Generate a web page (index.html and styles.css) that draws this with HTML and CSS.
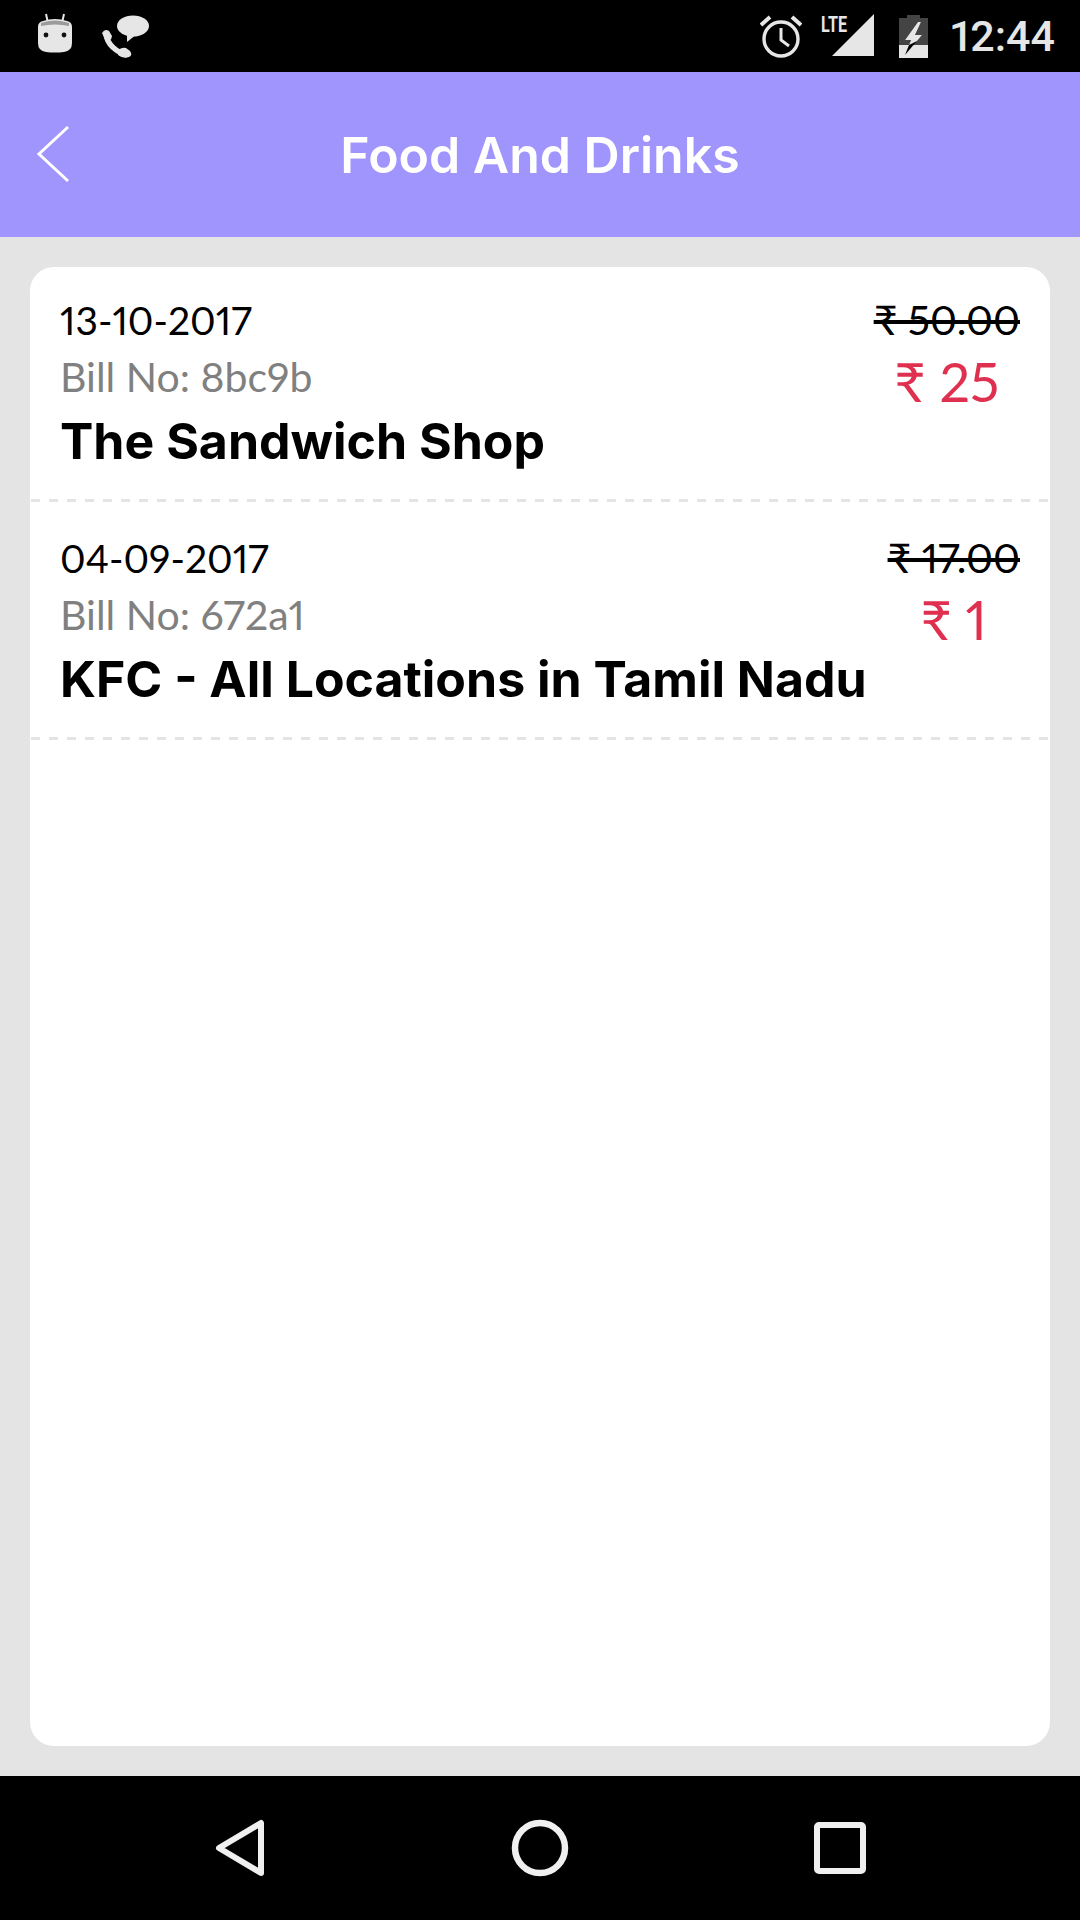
FILE: index.html
```html
<html>
<head>
    <title>Food And Drinks</title>
    <link rel="stylesheet" href="styles.css">
</head>
<body>
    <div class="statusBar">
        <div class="notifyIcons">
            <svg class="androidIcon" width="36" height="42" viewBox="0 0 36 42">
                <path d="M9 2 L11 11 M27 2 L25 11" stroke="#e6e6e6" stroke-width="2" fill="none"/>
                <path d="M6 9 Q18 5 30 9 Q35 10 35 15 L35 31 Q35 39 27 40 Q18 41 9 40 Q1 39 1 31 L1 15 Q1 10 6 9 Z" fill="#e6e6e6"/>
                <path d="M4 11 Q18 6 32 11 L32 14 Q18 11 4 14 Z" fill="#9a9a9a"/>
                <circle cx="9" cy="23" r="2.4" fill="#111"/>
                <circle cx="27" cy="23" r="2.4" fill="#111"/>
            </svg>
            <svg class="callIcon" width="52" height="46" viewBox="100 12 52 46">
                <path d="M107 33 C108 43 117 51 128 54" stroke="#e6e6e6" stroke-width="5.5" fill="none"/>
                <path d="M103 32 Q106 27 110 30 L113 35 Q113 38 110 40 L107 40 Z M119 50 Q122 46 127 47 L131 50 Q134 54 130 56 Q124 58 119 54 Z" fill="#e6e6e6"/>
                <ellipse cx="134" cy="25" rx="16" ry="10.5" fill="#e6e6e6"/>
                <path d="M128 32 L128 41 L138 33 Z" fill="#e6e6e6"/>
            </svg>
        </div>
        <div class="systemIcons">
            <svg class="alarmIcon" width="42" height="44" viewBox="0 0 42 44">
                <circle cx="21" cy="25" r="17" stroke="#e6e6e6" stroke-width="3.4" fill="none"/>
                <path d="M21 14 L21 26 L29 32" stroke="#e6e6e6" stroke-width="3" fill="none"/>
                <path d="M1 11 L10 3 M41 11 L32 3" stroke="#e6e6e6" stroke-width="4" fill="none"/>
            </svg>
            <svg class="signalIcon" width="54" height="60" viewBox="0 -8 54 60">
                <polygon points="12,42 54,0 54,42" fill="#e6e6e6"/>
                <text class="lteText" x="1" y="18" textLength="26" lengthAdjust="spacingAndGlyphs">LTE</text>
            </svg>
            <svg class="batteryIcon" width="29" height="43" viewBox="0 0 29 43">
                <path d="M8 0 L21 0 L21 3 L29 3 L29 30 L0 30 L0 3 L8 3 Z" fill="#444"/>
                <rect x="0" y="30" width="29" height="13" fill="#e6e6e6"/>
                <path d="M19 7 L6 25 L12 25 L6 40 L23 20 L16 20 L22 7 Z" fill="#000"/>
                <path d="M19 7 L6 25 L12 25 L10 30 L18 26 L23 20 L16 20 L22 7 Z" fill="#e6e6e6"/>
            </svg>
            <span class="clock">12:44</span>
        </div>
    </div>

    <div class="header">
        <svg class="backArrow" width="36" height="60" viewBox="0 0 36 60">
            <path d="M33 3 L4 30 L33 57" stroke="#fff" stroke-width="3" fill="none"/>
        </svg>
        <div class="headerTitle">Food And Drinks</div>
    </div>

    <div class="content">
        <div class="card">
            <div class="billRow">
                <div class="billInfo">
                    <div class="billDate">13-10-2017</div>
                    <div class="billNo">Bill No: 8bc9b</div>
                    <div class="shopName">The Sandwich Shop</div>
                </div>
                <div class="billPrice">
                    <div class="oldPrice">₹ 50.00</div>
                    <div class="newPrice">₹ 25</div>
                </div>
            </div>
            <div class="dashLine"></div>
            <div class="billRow">
                <div class="billInfo">
                    <div class="billDate">04-09-2017</div>
                    <div class="billNo">Bill No: 672a1</div>
                    <div class="shopName">KFC - All Locations in Tamil Nadu</div>
                </div>
                <div class="billPrice">
                    <div class="oldPrice">₹ 17.00</div>
                    <div class="newPrice">₹ 1</div>
                </div>
            </div>
            <div class="dashLine"></div>
        </div>
    </div>

    <div class="navBar">
        <svg width="60" height="60" viewBox="0 0 60 60">
            <path d="M51 5 L51 55 L9 30 Z" stroke="#f0f0f0" stroke-width="6" stroke-linejoin="round" fill="none"/>
        </svg>
        <svg width="60" height="60" viewBox="0 0 60 60">
            <circle cx="30" cy="30" r="25" stroke="#f0f0f0" stroke-width="6.5" fill="none"/>
        </svg>
        <svg width="60" height="60" viewBox="0 0 60 60">
            <rect x="7" y="7" width="46" height="46" rx="2" stroke="#f0f0f0" stroke-width="6" fill="none"/>
        </svg>
    </div>
</body>
</html>
```

FILE: styles.css
```css
body {
    margin: 0;
    width: 1080px;
    height: 1920px;
    display: flex;
    flex-direction: column;
    background-color: #e4e4e4;
    font-family: "Lato", "Roboto", sans-serif;
    font-variant-numeric: proportional-nums;
    overflow: hidden;
}

.statusBar {
    height: 72px;
    background-color: black;
    display: flex;
    justify-content: space-between;
    align-items: center;
    padding: 0 25px 0 37px;
}

.notifyIcons {
    display: flex;
    align-items: flex-start;
    gap: 26px;
}

.androidIcon {
    margin-top: -2px;
}

.callIcon {
    margin-top: -1px;
}

.systemIcons {
    display: flex;
    align-items: center;
}

.alarmIcon {
    margin-right: 18px;
}

.signalIcon {
    margin-right: 25px;
}

.batteryIcon {
    margin-right: 23px;
}

.lteText {
    font-family: "Roboto", sans-serif;
    font-weight: 700;
    font-size: 22px;
    fill: #e6e6e6;
}

.clock {
    font-family: "Roboto", sans-serif;
    font-size: 43px;
    font-weight: 500;
    color: #e6e6e6;
}

.header {
    height: 165px;
    background-color: #a094fd;
    display: flex;
    align-items: center;
    justify-content: center;
    position: relative;
}

.backArrow {
    position: absolute;
    left: 35px;
    top: 52px;
}

.headerTitle {
    font-family: "Inter", sans-serif;
    color: white;
    font-size: 50px;
    font-weight: 600;
}

.content {
    flex: 1;
    display: flex;
    padding: 30px;
}

.card {
    flex: 1;
    background-color: white;
    border-radius: 24px;
}

.billRow {
    display: flex;
    justify-content: space-between;
    padding: 27px 30px 22px 30px;
}

.billRow:first-child {
    padding-top: 24px;
}

.billDate {
    font-size: 39px;
    line-height: 58px;
    color: black;
}

.billNo {
    font-size: 41px;
    line-height: 56px;
    color: #808080;
}

.shopName {
    font-family: "Inter", sans-serif;
    font-size: 50px;
    line-height: 72px;
    font-weight: 700;
    color: black;
}

.billPrice {
    display: flex;
    flex-direction: column;
    align-items: center;
}

.oldPrice {
    font-size: 41px;
    line-height: 58px;
    color: black;
    text-decoration: line-through;
}

.newPrice {
    font-size: 54px;
    line-height: 66px;
    color: #e0304f;
}

.dashLine {
    height: 3px;
    margin: 0 1px;
    background: repeating-linear-gradient(to right, #e4e4e4 0, #e4e4e4 9px, white 9px, white 18px);
}

.navBar {
    height: 144px;
    background-color: black;
    display: flex;
    justify-content: center;
    align-items: center;
    gap: 240px;
}
```
